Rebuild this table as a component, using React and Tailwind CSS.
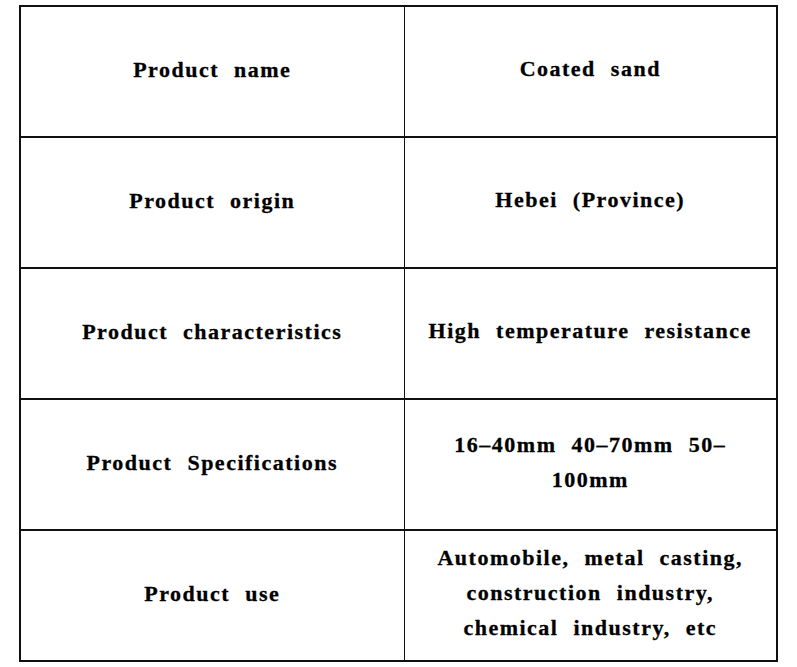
const rows = [
  ["Product name", "Coated sand"],
  ["Product origin", "Hebei (Province)"],
  ["Product characteristics", "High temperature resistance"],
  ["Product Specifications", "16–40mm 40–70mm 50–100mm"],
  ["Product use", "Automobile, metal casting, construction industry, chemical industry, etc"],
];

export default function App() {
  return (
    <div className="min-h-screen bg-white pt-[5px] pl-[19px]">
      <table
        className="w-[759px] border-collapse text-black font-bold text-[22px] leading-[35px] tracking-[1.5px] [word-spacing:8px] [-webkit-text-stroke:0.3px_black]"
        style={{ fontFamily: '"Liberation Serif", "Noto Sans CJK SC", serif' }}
      >
        <tbody>
          {rows.map(([label, value]) => (
            <tr key={label} className="h-[131px]">
              <td className="w-[384px] border-2 border-[#111] border-r-[1.5px] text-center align-middle px-4 pb-[5px]">
                {label}
              </td>
              <td className="border-2 border-[#111] border-l-[1.5px] text-center align-middle px-[20px] pb-[6px]">
                {value}
              </td>
            </tr>
          ))}
        </tbody>
      </table>
    </div>
  );
}
